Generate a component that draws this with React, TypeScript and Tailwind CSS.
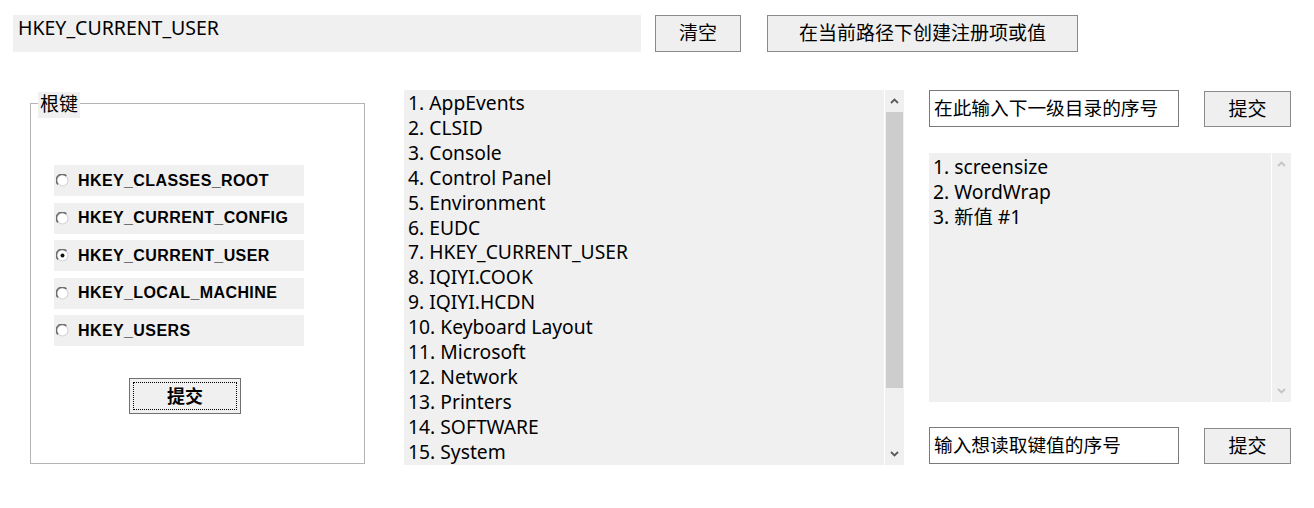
import React from 'react'

const ui = '"Noto Sans", "Noto Sans CJK SC", sans-serif'

const keys = [
  'AppEvents',
  'CLSID',
  'Console',
  'Control Panel',
  'Environment',
  'EUDC',
  'HKEY_CURRENT_USER',
  'IQIYI.COOK',
  'IQIYI.HCDN',
  'Keyboard Layout',
  'Microsoft',
  'Network',
  'Printers',
  'SOFTWARE',
  'System',
]

const values = ['screensize', 'WordWrap', '新值 #1']

const roots = [
  'HKEY_CLASSES_ROOT',
  'HKEY_CURRENT_CONFIG',
  'HKEY_CURRENT_USER',
  'HKEY_LOCAL_MACHINE',
  'HKEY_USERS',
]

function Chevron({ up, color }: { up?: boolean; color: string }) {
  return (
    <svg width="9" height="6" viewBox="0 0 9 6">
      <path
        d={up ? 'M1 5 L4.5 1.5 L8 5' : 'M1 1 L4.5 4.5 L8 1'}
        fill="none"
        stroke={color}
        strokeWidth="1.8"
      />
    </svg>
  )
}

function Radio({ checked }: { checked?: boolean }) {
  return (
    <svg width="13" height="13" viewBox="0 0 13 13" className="shrink-0">
      <circle cx="6.5" cy="6.5" r="5.5" fill="#ffffff" stroke="#d6d6d6" strokeWidth="1.2" />
      <path d="M2 10.4 A5.5 5.5 0 0 1 10.4 2" fill="none" stroke="#6e6e6e" strokeWidth="1.6" />
      {checked && <circle cx="6.5" cy="6.5" r="2" fill="#111111" />}
    </svg>
  )
}

function Button({ label, className }: { label: string; className: string }) {
  return (
    <button
      className={
        'flex items-center justify-center border border-[#8a8a8a] bg-[#efefef] text-[19px] text-black ' +
        className
      }
      style={{ fontFamily: ui }}
    >
      {label}
    </button>
  )
}

function Scrollbar({ enabled }: { enabled: boolean }) {
  const arrow = enabled ? '#5a5a5a' : '#c4c4c4'
  return (
    <div className="flex w-[20px] flex-col border-l border-white bg-[#f0f0f0]">
      <div className="flex h-[22px] items-center justify-center">
        <Chevron up color={arrow} />
      </div>
      <div className="flex-1 px-[1px]">
        {enabled && <div className="h-[276px] bg-[#cdcdcd]" />}
      </div>
      <div className="flex h-[22px] items-center justify-center">
        <Chevron color={arrow} />
      </div>
    </div>
  )
}

export default function App() {
  return (
    <div className="h-[508px] w-[1314px] bg-white text-black" style={{ fontFamily: ui }}>
      {/* path bar */}
      <div className="flex items-start pl-[13px] pt-[15px]">
        <div className="h-[37px] w-[628px] bg-[#f0f0f0] pl-[5px] text-[19.5px] leading-[26px]">
          HKEY_CURRENT_USER
        </div>
        <Button label="清空" className="ml-[14px] h-[37px] w-[86px]" />
        <Button label="在当前路径下创建注册项或值" className="ml-[26px] h-[37px] w-[311px]" />
      </div>

      <div className="mt-[38px] flex items-start pl-[30px]">
        {/* root key group */}
        <div className="relative mt-[13px] h-[361px] w-[335px] border border-[#b4b4b4]">
          <div className="absolute left-[7px] top-[-12px] h-[26px] bg-[#f0f0f0] px-[2px] text-[19px] leading-[24px]">
            根键
          </div>
          <div className="flex flex-col gap-[6.5px] pl-[23px] pt-[61px]">
            {roots.map((r, i) => (
              <div
                key={r}
                className="flex h-[31px] w-[250px] items-center gap-[9px] bg-[#f0f0f0] pl-[2px]"
              >
                <Radio checked={i === 2} />
                <span
                  className="text-[16px] font-bold tracking-[0.4px]"
                  style={{ fontFamily: '"Liberation Sans", sans-serif' }}
                >
                  {r}
                </span>
              </div>
            ))}
          </div>
          <div className="ml-[98px] mt-[32px] h-[36px] w-[112px] border border-[#707070] bg-[#f0f0f0] p-[3px]">
            <div className="flex h-full items-center justify-center border border-dotted border-black text-[18px] font-bold">
              提交
            </div>
          </div>
        </div>

        {/* key list */}
        <div className="ml-[39px] flex h-[375px] w-[500px] bg-[#f0f0f0]">
          <div className="flex-1 overflow-hidden pl-[4px] pt-[1px] text-[19.3px] leading-[24.9px]">
            {keys.map((k, i) => (
              <div key={k}>
                {i + 1}. {k}
              </div>
            ))}
          </div>
          <Scrollbar enabled />
        </div>

        {/* right column */}
        <div className="ml-[25px] flex flex-col">
          <div className="flex items-start">
            <div className="h-[37px] w-[250px] border border-[#7a7a7a] bg-white pl-[4px] text-[18.7px] leading-[33px]">
              在此输入下一级目录的序号
            </div>
            <Button label="提交" className="ml-[25px] mt-[1px] h-[36px] w-[87px]" />
          </div>
          <div className="mt-[26px] flex h-[249px] w-[362px] bg-[#f0f0f0]">
            <div className="flex-1 pl-[4px] pt-[1px] text-[19.3px] leading-[25px]">
              {values.map((v, i) => (
                <div key={v}>
                  {i + 1}. {v}
                </div>
              ))}
            </div>
            <Scrollbar enabled={false} />
          </div>
          <div className="mt-[25px] flex items-start">
            <div className="h-[37px] w-[250px] border border-[#7a7a7a] bg-white pl-[4px] text-[18.7px] leading-[33px]">
              输入想读取键值的序号
            </div>
            <Button label="提交" className="ml-[25px] mt-[1px] h-[36px] w-[87px]" />
          </div>
        </div>
      </div>
    </div>
  )
}
